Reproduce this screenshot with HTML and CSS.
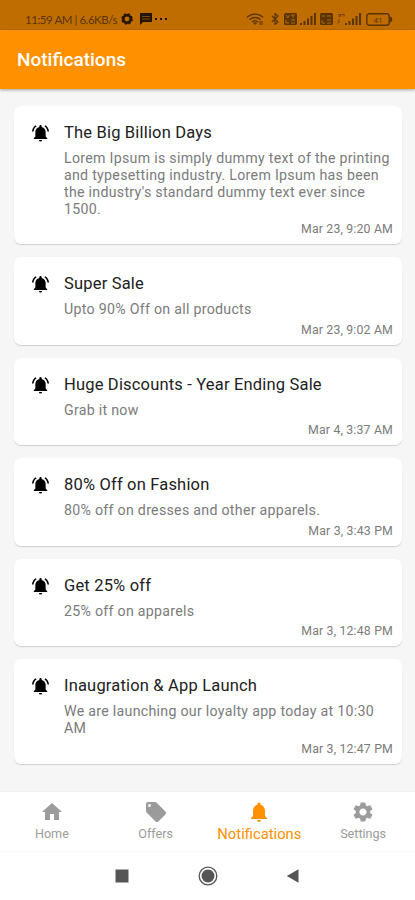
FILE: index.html
```html
<!DOCTYPE html>
<html lang="en">
<head>
    <meta charset="UTF-8">
    <meta name="viewport" content="width=device-width, initial-scale=1.0">
    <title>Notifications</title>
    <link rel="stylesheet" href="styles.css">
</head>
<body>

    <!-- Shared icons -->
    <svg class="icon-defs" width="0" height="0">
        <symbol id="bell-ring" viewBox="0 0 24 24">
            <path d="M7.1 3.600 5.700 2.200C3 4.200 1.500 7 1.200 10.200h2c.3-2.650 1.700-4.900 3.900-6.600zM20.800 10.200h2c-.3-3.200-1.800-6-4.500-8l-1.400 1.400c2.200 1.700 3.600 3.950 3.900 6.600zM18.500 10.500c0-3.200-1.900-5.500-5-6.200V3.500a1.500 1.500 0 0 0-3 0v.8c-3.100.7-5 3-5 6.200V16.500l-2 2v1h17v-1l-2-2zM12 22.800a2 2 0 0 0 2-2h-4a2 2 0 0 0 2 2z"/>
        </symbol>
        <symbol id="signal" viewBox="0 0 16 12">
            <path d="M0 10h2v2H0zM3.500 8h2v4h-2zM7 5.500h2V12H7zM10.500 3h2v9h-2zM14 0h2v12h-2z"/>
        </symbol>
    </svg>

    <div class="status-bar">
        <div class="status-left">
            <span class="clock">11:59 AM | 6.6KB/s</span>
            <svg class="gear-small" viewBox="0 0 12 12"><circle cx="6" cy="6" r="3.700" fill="none" stroke="currentColor" stroke-width="2.600"/><circle cx="6" cy="6" r="5.200" fill="none" stroke="currentColor" stroke-width="1.200" stroke-dasharray="2.400 1.700"/></svg>
            <svg class="message" viewBox="0 0 14 12"><path d="M1 0h12v9H4l-3 3z" fill="currentColor"/><path d="M3 3.500h8M3 6h8" stroke="#c06d00" stroke-width=".6"/></svg>
            <span class="dots"><i></i><i></i><i></i></span>
        </div>
        <div class="status-right">
            <svg class="wifi" viewBox="0 0 18 12" fill="none" stroke="currentColor" stroke-width="1.400"><path d="M1 4.300c4.500-4.300 11.500-4.300 16 0M3.500 6.700c3.200-3 7.800-3 11 0M6 9c1.800-1.600 4.200-1.600 6 0"/><path d="M7.500 10 9 11.500l1.500-1.500zM14 8v4M16 8v4" stroke-width="1"/></svg>
            <svg class="bluetooth" viewBox="0 0 8 12" fill="none" stroke="currentColor" stroke-width="1.200"><path d="m1 3 6 6-3 2.500V.500L7 3 1 9"/></svg>
            <svg class="volte volte-one" viewBox="0 0 13 12"><rect width="13" height="12" rx="1.500" fill="currentColor"/><path d="m2 2 1.700 3L5.500 2M7 2h4M9 2v3M2 7v3h3M7 7h4M7 10h4" fill="none" stroke="#c06d00" stroke-width=".9"/></svg>
            <svg class="bars bars-one"><use href="#signal"/></svg>
            <svg class="volte volte-two" viewBox="0 0 13 12"><rect width="13" height="12" rx="1.500" fill="currentColor"/><path d="M2 3h3M7 3h4M2 7v3h3M7 7h4M7 10h4" fill="none" stroke="#c06d00" stroke-width=".9"/></svg>
            <svg class="network" viewBox="0 0 9 12" fill="none" stroke="currentColor" stroke-width=".9"><path d="M1 1h3v2H2M5 1h3v2M1 8l2-2M1 11l2-3"/></svg>
            <svg class="bars bars-two"><use href="#signal"/></svg>
            <svg class="battery" viewBox="0 0 27 13"><rect x=".8" y=".8" width="22.400" height="11.400" rx="2.500" fill="none" stroke="currentColor" stroke-width="1.400"/><path d="M24 3.500c3 1 3 5 0 6z" fill="currentColor"/><text x="12" y="9.500" text-anchor="middle">41</text></svg>
        </div>
    </div>

    <header class="app-bar">
        <h1>Notifications</h1>
    </header>

    <main class="notifications">
        <article class="card">
            <svg class="card-icon"><use href="#bell-ring"/></svg>
            <div class="card-body">
                <h2>The Big Billion Days</h2>
                <p>Lorem Ipsum is simply dummy text of the printing and typesetting industry. Lorem Ipsum has been the industry's standard dummy text ever since 1500.</p>
                <time>Mar 23, 9:20 AM</time>
            </div>
        </article>
        <article class="card">
            <svg class="card-icon"><use href="#bell-ring"/></svg>
            <div class="card-body">
                <h2>Super Sale</h2>
                <p>Upto 90% Off on all products</p>
                <time>Mar 23, 9:02 AM</time>
            </div>
        </article>
        <article class="card">
            <svg class="card-icon"><use href="#bell-ring"/></svg>
            <div class="card-body">
                <h2>Huge Discounts - Year Ending Sale</h2>
                <p>Grab it now</p>
                <time>Mar 4, 3:37 AM</time>
            </div>
        </article>
        <article class="card">
            <svg class="card-icon"><use href="#bell-ring"/></svg>
            <div class="card-body">
                <h2>80% Off on Fashion</h2>
                <p>80% off on dresses and other apparels.</p>
                <time>Mar 3, 3:43 PM</time>
            </div>
        </article>
        <article class="card">
            <svg class="card-icon"><use href="#bell-ring"/></svg>
            <div class="card-body">
                <h2>Get 25% off</h2>
                <p>25% off on apparels</p>
                <time>Mar 3, 12:48 PM</time>
            </div>
        </article>
        <article class="card">
            <svg class="card-icon"><use href="#bell-ring"/></svg>
            <div class="card-body">
                <h2>Inaugration &amp; App Launch</h2>
                <p>We are launching our loyalty app today at 10:30 AM</p>
                <time>Mar 3, 12:47 PM</time>
            </div>
        </article>
    </main>

    <nav class="tabs">
        <a class="tab">
            <svg viewBox="0 0 24 24"><path d="M10 20v-6h4v6h5v-8h3L12 3 2 12h3v8z"/></svg>
            <span>Home</span>
        </a>
        <a class="tab">
            <svg viewBox="0 0 24 24"><path d="m21.410 11.580-9-9C12.050 2.220 11.550 2 11 2H4c-1.100 0-2 .9-2 2v7c0 .55.220 1.050.590 1.420l9 9c.36.360.860.580 1.410.580s1.050-.22 1.410-.59l7-7c.37-.36.590-.86.590-1.410s-.23-1.060-.59-1.420zM5.500 7C4.670 7 4 6.330 4 5.500S4.670 4 5.500 4 7 4.670 7 5.500 6.330 7 5.500 7z"/></svg>
            <span>Offers</span>
        </a>
        <a class="tab active">
            <svg viewBox="0 0 24 24"><path d="M12 22c1.100 0 2-.9 2-2h-4c0 1.100.890 2 2 2zm6-6v-5c0-3.070-1.640-5.640-4.500-6.320V4c0-.83-.67-1.500-1.500-1.500s-1.500.670-1.500 1.500v.68C7.630 5.360 6 7.920 6 11v5l-2 2v1h16v-1l-2-2z"/></svg>
            <span>Notifications</span>
        </a>
        <a class="tab">
            <svg viewBox="0 0 24 24"><path d="M19.140 12.940c.04-.3.060-.61.060-.94 0-.32-.02-.64-.07-.94l2.030-1.580c.18-.14.230-.41.120-.61l-1.920-3.320c-.12-.22-.37-.29-.59-.22l-2.390.96c-.5-.38-1.030-.7-1.620-.94l-.36-2.540c-.04-.24-.24-.41-.48-.41h-3.840c-.24 0-.43.170-.47.410l-.36 2.540c-.59.240-1.130.570-1.620.940l-2.390-.96c-.22-.08-.47 0-.59.220L2.740 8.870c-.12.210-.08.470.120.610l2.030 1.580c-.05.300-.09.630-.09.940s.02.640.07.940l-2.030 1.580c-.18.140-.23.410-.12.610l1.920 3.320c.12.220.370.290.590.220l2.390-.96c.5.380 1.030.700 1.620.940l.36 2.540c.05.240.240.410.480.410h3.840c.24 0 .44-.17.470-.41l.36-2.540c.59-.24 1.130-.56 1.620-.94l2.390.96c.22.080.470 0 .59-.22l1.920-3.320c.12-.22.070-.47-.12-.61l-2.010-1.580zM12 15.600c-1.980 0-3.600-1.620-3.600-3.600s1.620-3.600 3.600-3.600 3.600 1.620 3.600 3.600-1.620 3.600-3.600 3.600z"/></svg>
            <span>Settings</span>
        </a>
    </nav>

    <div class="system-nav">
        <svg viewBox="0 0 20 20"><path d="M3.500 3.500h13v13h-13z"/></svg>
        <svg viewBox="0 0 20 20"><circle cx="10" cy="10" r="8.800" fill="none" stroke="#555" stroke-width="1.300"/><circle cx="10" cy="10" r="6.500"/></svg>
        <svg viewBox="0 0 20 20"><path d="M15.500 3.300v13.400L3.800 10z"/></svg>
    </div>

</body>
</html>
```
FILE: styles.css
```css
* {
    box-sizing: border-box;
}
body {
    margin: 0;
    height: 900px;
    display: flex;
    flex-direction: column;
    overflow: hidden;
    font-family: Roboto, sans-serif;
    background-color: #f6f6f6;
}
h1, h2, p {
    margin: 0;
}
.icon-defs {
    display: none;
}

/* Status bar */
.status-bar {
    height: 30px;
    flex: none;
    padding: 8px 22px 0 25px;
    display: flex;
    justify-content: space-between;
    background: #c06d00;
    color: #5a3405;
}
.status-left,
.status-right {
    display: flex;
    align-items: center;
    height: 22px;
}
.clock {
    font-family: Lato, sans-serif;
    font-size: 11.5px;
    letter-spacing: -0.45px;
    width: 92px;
    white-space: nowrap;
}
.gear-small {
    width: 12px;
    height: 12px;
    margin-left: 4px;
    color: #241500;
}
.message {
    width: 14px;
    height: 12px;
    margin-left: 6px;
    color: #241500;
}
.dots {
    display: flex;
    gap: 3px;
    margin-left: 2px;
}
.dots i {
    width: 2px;
    height: 2px;
    background: #241500;
}
.wifi {
    width: 18px;
    height: 12px;
}
.bluetooth {
    width: 8px;
    height: 12px;
    margin-left: 7px;
}
.volte {
    width: 13px;
    height: 12px;
}
.volte-one {
    margin-left: 5px;
}
.bars {
    width: 16px;
    height: 12px;
    fill: currentColor;
}
.bars-one {
    margin-left: 3px;
}
.volte-two {
    margin-left: 4px;
}
.network {
    width: 8px;
    height: 12px;
    margin-left: 4px;
}
.battery {
    width: 27px;
    height: 13px;
    margin-left: 5px;
}
.battery text {
    font-size: 8px;
    fill: currentColor;
}

/* App bar */
.app-bar {
    height: 59px;
    flex: none;
    padding-left: 17px;
    display: flex;
    align-items: center;
    background: #ff9000;
    box-shadow: 0 1px 3px rgba(0, 0, 0, 0.35);
}
.app-bar h1 {
    font-size: 19px;
    font-weight: 500;
    color: #fff;
}

/* Notification list */
.notifications {
    flex: 1;
    padding: 17px 13px 0 14px;
    display: flex;
    flex-direction: column;
    gap: 13.2px;
}
.card {
    display: flex;
    padding: 17px 9px 7px 17px;
    border-radius: 7px;
    background: #fff;
    box-shadow: 0 1px 1px rgba(0, 0, 0, 0.16);
}
.card-icon {
    width: 19px;
    height: 20px;
    flex: none;
}
.card-body {
    flex: 1;
    margin-left: 14px;
    display: flex;
    flex-direction: column;
}
.card h2 {
    font-size: 16.5px;
    line-height: 19px;
    letter-spacing: 0.18px;
    font-weight: 400;
    color: #212121;
}
.card p {
    margin-top: 8px;
    font-size: 14.2px;
    line-height: 17px;
    letter-spacing: 0.28px;
    color: #7b7b7b;
}
.card time {
    align-self: flex-end;
    margin-top: 3.3px;
    font-size: 12.3px;
    line-height: 16px;
    letter-spacing: 0.17px;
    color: #7b7b7b;
}

/* Bottom tabs */
.tabs {
    height: 60px;
    flex: none;
    display: flex;
    background: #fff;
    border-top: 1px solid #f0f0f0;
}
.tab {
    flex: 1;
    padding-top: 8px;
    display: flex;
    flex-direction: column;
    align-items: center;
    font-size: 12.6px;
    line-height: 20px;
    color: #9b9b9b;
}
.tab svg {
    width: 24px;
    height: 24px;
    fill: currentColor;
}
.tab.active {
    font-size: 14.8px;
    color: #ff9000;
}

/* Android navigation */
.system-nav {
    height: 49px;
    flex: none;
    padding-bottom: 1px;
    display: flex;
    justify-content: center;
    align-items: center;
    gap: 65.5px;
    background: #fff;
    border-top: 1px solid #fafafa;
}
.system-nav svg {
    width: 20px;
    height: 20px;
    fill: #555;
}
```
